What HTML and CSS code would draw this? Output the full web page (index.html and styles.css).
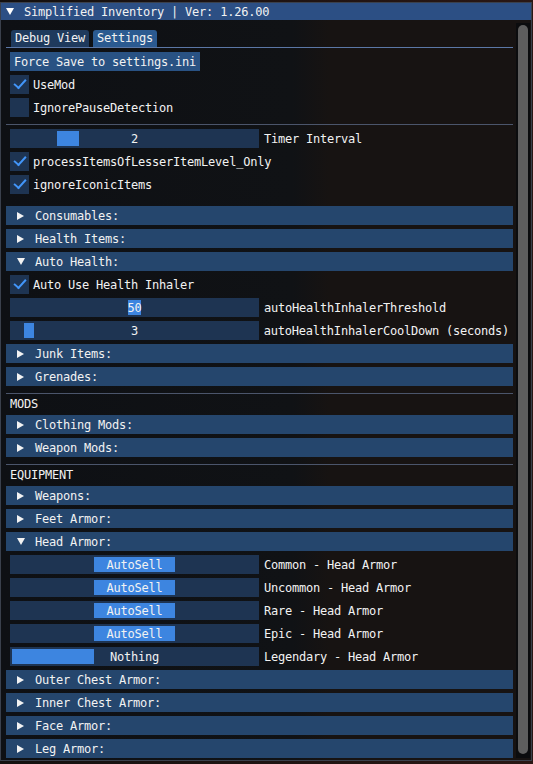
FILE: index.html
```html
<!DOCTYPE html>
<html lang="en">
  <head>
    <meta charset="UTF-8" />
    <meta name="viewport" content="width=device-width, initial-scale=1.0" />
    <title>Simplified Inventory</title>
    <link rel="stylesheet" href="styles.css">
  </head>
  <body>
    <div class="window">
      <div class="titlebar">
        <svg class="arrow" width="8" height="7" viewBox="0 0 8 7"><polygon points="0,0 8,0 4,7" fill="#fff"/></svg>
        <span>Simplified Inventory | Ver: 1.26.00</span>
      </div>

      <div class="body">
        <div class="content">
          <div class="tabbar">
            <div class="tabs">
              <div class="tab">Debug View</div>
              <div class="tab active">Settings</div>
            </div>
          </div>

          <div class="row"><button class="btn">Force Save to settings.ini</button></div>

          <div class="check"><span class="box on"></span>UseMod</div>
          <div class="check"><span class="box"></span>IgnorePauseDetection</div>

          <div class="separator"></div>

          <div class="slider-row">
            <div class="frame"><span class="grab" style="left:47px;width:22px"></span><span class="value">2</span></div>
            <span class="label">Timer Interval</span>
          </div>
          <div class="check"><span class="box on"></span>processItemsOfLesserItemLevel_Only</div>
          <div class="check"><span class="box on"></span>ignoreIconicItems</div>

          <div class="header first"><span class="tri right"></span>Consumables:</div>
          <div class="header"><span class="tri right"></span>Health Items:</div>
          <div class="header"><span class="tri down"></span>Auto Health:</div>
          <div class="check"><span class="box on"></span>Auto Use Health Inhaler</div>
          <div class="slider-row">
            <div class="frame"><span class="grab" style="left:118px;width:13px"></span><span class="value">50</span></div>
            <span class="label">autoHealthInhalerThreshold</span>
          </div>
          <div class="slider-row">
            <div class="frame"><span class="grab" style="left:14px;width:10px"></span><span class="value">3</span></div>
            <span class="label">autoHealthInhalerCoolDown (seconds)</span>
          </div>
          <div class="header"><span class="tri right"></span>Junk Items:</div>
          <div class="header"><span class="tri right"></span>Grenades:</div>

          <div class="separator"></div>
          <div class="section">MODS</div>
          <div class="header"><span class="tri right"></span>Clothing Mods:</div>
          <div class="header"><span class="tri right"></span>Weapon Mods:</div>

          <div class="separator"></div>
          <div class="section">EQUIPMENT</div>
          <div class="header"><span class="tri right"></span>Weapons:</div>
          <div class="header"><span class="tri right"></span>Feet Armor:</div>
          <div class="header"><span class="tri down"></span>Head Armor:</div>
          <div class="slider-row">
            <div class="frame"><span class="grab" style="left:84px;width:81px"></span><span class="value">AutoSell</span></div>
            <span class="label">Common - Head Armor</span>
          </div>
          <div class="slider-row">
            <div class="frame"><span class="grab" style="left:84px;width:81px"></span><span class="value">AutoSell</span></div>
            <span class="label">Uncommon - Head Armor</span>
          </div>
          <div class="slider-row">
            <div class="frame"><span class="grab" style="left:84px;width:81px"></span><span class="value">AutoSell</span></div>
            <span class="label">Rare - Head Armor</span>
          </div>
          <div class="slider-row">
            <div class="frame"><span class="grab" style="left:84px;width:81px"></span><span class="value">AutoSell</span></div>
            <span class="label">Epic - Head Armor</span>
          </div>
          <div class="slider-row">
            <div class="frame"><span class="grab" style="left:2px;width:82px"></span><span class="value">Nothing</span></div>
            <span class="label">Legendary - Head Armor</span>
          </div>
          <div class="header"><span class="tri right"></span>Outer Chest Armor:</div>
          <div class="header"><span class="tri right"></span>Inner Chest Armor:</div>
          <div class="header"><span class="tri right"></span>Face Armor:</div>
          <div class="header"><span class="tri right"></span>Leg Armor:</div>
        </div>

        <div class="scrollbar"><div class="scroll-grab"></div></div>
      </div>
    </div>
  </body>
</html>
```

FILE: styles.css
```css
body {
  margin: 0;
  width: 533px;
  height: 764px;
  overflow: hidden;
  background: linear-gradient(90deg, #14100f 0%, #2a1714 100%);
  font-family: "DejaVu Sans Mono", "Liberation Mono", monospace;
  font-size: 12px;
  letter-spacing: -0.22px;
  color: #f2f2f2;
}

.window {
  margin-top: 2px;
  width: 530px;
  height: 757px;
  border: 1px solid #3a404c;
  background: linear-gradient(90deg, #0e1014 0%, #101215 55%, #171312 62%, #171312 100%);
  display: flex;
  flex-direction: column;
}

.titlebar {
  height: 17px;
  background-color: #2c4f84;
  display: flex;
  align-items: center;
  padding-left: 5px;
  white-space: pre;
}

.titlebar .arrow {
  margin-right: 10px;
}

.body {
  flex: 1;
  display: flex;
  min-height: 0;
}

.content {
  width: 499px;
  padding: 10px 0 0 9px;
  display: flex;
  flex-direction: column;
  gap: 4px;
}

.tabbar {
  margin: 0 -4px 0 -4px;
  padding-left: 5px;
  border-bottom: 1px solid #5b77a6;
}

.tabs {
  display: flex;
  gap: 4px;
}

.tab {
  height: 17px;
  line-height: 17px;
  padding: 0 4px;
  background-color: #1f3a5d;
  border-radius: 3px 3px 0 0;
}

.tab.active {
  background-color: #2b5a90;
}

.row {
  display: flex;
}

.btn {
  height: 19px;
  padding: 0 4px;
  border: none;
  background-color: #295283;
  color: #f2f2f2;
  font: inherit;
  letter-spacing: inherit;
}

.check {
  height: 19px;
  display: flex;
  align-items: center;
  gap: 4px;
  white-space: pre;
}

.box {
  width: 19px;
  height: 19px;
  background-color: #1e3452;
  display: flex;
  align-items: center;
  justify-content: center;
}

.box.on::before {
  content: "";
  width: 10px;
  height: 5px;
  border-left: 2.5px solid #4296fa;
  border-bottom: 2.5px solid #4296fa;
  transform: translate(0, -2px) rotate(-48deg);
  transform-origin: center;
}

.separator {
  height: 1px;
  margin: 3px -4px 0 -4px;
  background-color: #4b556b;
}

.slider-row {
  height: 19px;
  display: flex;
  align-items: center;
  gap: 5px;
  white-space: pre;
}

.frame {
  position: relative;
  width: 249px;
  height: 19px;
  background-color: #1e3452;
  display: flex;
  align-items: center;
  justify-content: center;
}

.grab {
  position: absolute;
  top: 2px;
  bottom: 2px;
  background-color: #3d85e0;
}

.value {
  position: relative;
}

.header {
  height: 19px;
  margin: 0 -4px;
  padding-left: 11px;
  background-color: #25466d;
  display: flex;
  align-items: center;
  white-space: pre;
}

.header.first {
  margin-top: 8px;
}

.tri {
  width: 0;
  height: 0;
  margin-right: 11px;
}

.tri.right {
  border-top: 4px solid transparent;
  border-bottom: 4px solid transparent;
  border-left: 7px solid #f2f2f2;
}

.tri.down {
  border-left: 4px solid transparent;
  border-right: 4px solid transparent;
  border-top: 7px solid #f2f2f2;
  margin-right: 10px;
}

.section {
  height: 13px;
  line-height: 13px;
}

.scrollbar {
  margin: 3px 0 2px 7px;
  width: 14px;
  background-color: #0b0c0e;
  display: flex;
  justify-content: center;
  padding: 2px 0 4px;
}

.scroll-grab {
  width: 10px;
  background-color: #5e5e5e;
  border-radius: 5px;
}
```
